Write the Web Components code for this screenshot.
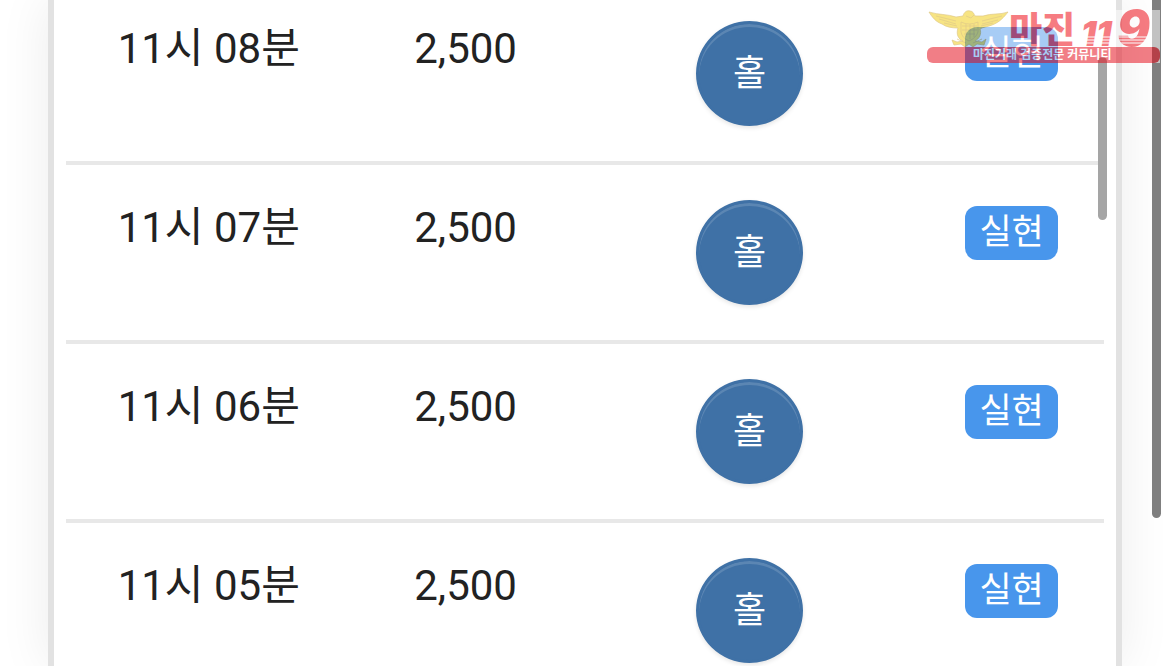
<!DOCTYPE html>
<html lang="ko">
<head>
<meta charset="utf-8">
<meta name="viewport" content="width=device-width, initial-scale=1">
<title>거래내역</title>
<style>
  body {
    margin: 0;
    background: #fff;
    color: #222;
    font-family: Roboto, "Noto Sans CJK KR", sans-serif;
    height: 100vh;
    overflow: hidden;
  }
</style>
</head>
<body>
<trade-page>
  <trade-panel><trade-list></trade-list></trade-panel>
  <brand-mark slot="mark"></brand-mark>
</trade-page>

<script>
class TradePage extends HTMLElement {
  constructor() {
    super();
    this.attachShadow({ mode: 'open' }).innerHTML = `
      <style>
        :host {
          display: block;
          position: relative;
          height: 100%;
          padding: 0 48px;
          box-sizing: border-box;
          overflow: hidden;
        }
        .thumb {
          position: absolute;
          top: -8px;
          right: 9px;
          width: 9px;
          height: 526px;
          border-radius: 5px;
          background: #7f7f7f;
        }
        ::slotted([slot="mark"]) {
          position: absolute;
          top: 10px;
          right: 10px;
        }
      </style>
      <slot></slot>
      <div class="thumb"></div>
      <slot name="mark"></slot>
    `;
  }
}

class TradePanel extends HTMLElement {
  constructor() {
    super();
    this.attachShadow({ mode: 'open' }).innerHTML = `
      <style>
        :host {
          display: block;
          position: relative;
          height: 100%;
          box-sizing: border-box;
          padding: 0 12px;
          border: solid #e2e2e2;
          border-width: 0 6px;
          background: #fff;
          box-shadow: 0 0 48px rgba(0, 0, 0, 0.08);
        }
        .view {
          height: 100%;
          overflow: hidden;
        }
        .thumb {
          position: absolute;
          top: 57px;
          right: 9px;
          width: 9px;
          height: 163px;
          border-radius: 5px;
          background: #a5a5a5;
        }
      </style>
      <div class="view"><slot></slot></div>
      <div class="thumb"></div>
    `;
  }
}

class PickButton extends HTMLElement {
  constructor() {
    super();
    this.attachShadow({ mode: 'open' }).innerHTML = `
      <style>
        :host { display: inline-block; vertical-align: top; }
        button {
          display: block;
          width: 107px;
          height: 105px;
          padding: 0;
          border: 3px solid #3f71a6;
          border-radius: 50%;
          background: #3f71a6;
          color: #fff;
          font: inherit;
          font-size: 36px;
          line-height: 101px;
          box-shadow: inset 0 3px 0 rgba(255, 255, 255, 0.15), 0 2px 4px rgba(0, 0, 0, 0.1);
        }
      </style>
      <button type="button"><slot></slot></button>
    `;
  }
}

class StatusTag extends HTMLElement {
  constructor() {
    super();
    this.attachShadow({ mode: 'open' }).innerHTML = `
      <style>
        :host {
          display: inline-block;
          vertical-align: top;
          margin-top: 6px;
          padding: 0 14px;
          border-radius: 12px;
          background: #4896ec;
          color: #fff;
          font-size: 35px;
          line-height: 54px;
        }
      </style>
      <slot></slot>
    `;
  }
}

class TradeList extends HTMLElement {
  constructor() {
    super();
    this.attachShadow({ mode: 'open' });
  }

  connectedCallback() {
    const rows = [
      ['11시 08분', '2,500', '홀', '실현'],
      ['11시 07분', '2,500', '홀', '실현'],
      ['11시 06분', '2,500', '홀', '실현'],
      ['11시 05분', '2,500', '홀', '실현']
    ];
    this.shadowRoot.innerHTML = `
      <style>
        /* the list is scrolled a little way into its first row */
        :host { display: block; margin-top: -14px; }
        table {
          width: 100%;
          table-layout: fixed;
          border-spacing: 0;
          font-size: 42px;
          line-height: 56px;
        }
        .time { width: 27.5%; }
        .amount { width: 22%; }
        .pick { width: 32.7%; }
        td {
          padding: 35px 0;
          border-bottom: 4px solid #e8e8e8;
          text-align: center;
          vertical-align: top;
          white-space: nowrap;
        }
      </style>
      <table>
        <colgroup><col class="time"><col class="amount"><col class="pick"><col></colgroup>
        <tbody>
          ${rows.map(([time, amount, pick, status]) => `
            <tr>
              <td>${time}</td>
              <td>${amount}</td>
              <td><pick-button>${pick}</pick-button></td>
              <td><status-tag>${status}</status-tag></td>
            </tr>`).join('')}
        </tbody>
      </table>
    `;
  }
}

class BrandMark extends HTMLElement {
  constructor() {
    super();
    this.attachShadow({ mode: 'open' }).innerHTML = `
      <style>
        :host { display: block; opacity: 0.52; pointer-events: none; }
        svg { display: block; overflow: visible; }
        text { font-family: Roboto, "Noto Sans CJK KR", sans-serif; }
        .name { font-size: 36px; font-weight: 900; fill: #ee0510; }
        .num { font-family: Inter, Roboto, sans-serif; font-weight: 900; font-style: italic; fill: #ee0510; }
        .small { font-size: 34px; }
        .big { font-size: 49px; }
        .line { font-size: 12px; font-weight: 700; fill: #fff; }
      </style>
      <svg width="233" height="53" viewBox="0 0 233 53">
        <rect x="2" width="231" height="53" fill="#fff"/>
        <!-- eagle -->
        <g fill="#f0cc14" stroke="#c49a1c" stroke-width="0.7" stroke-linejoin="round">
          <path d="M2 2 C12 5 20 4 29 7 L36 6 C37 2 40 0 43 1 C46 1 47 4 48 6 L56 6 C65 3 73 5 81 2 C77 7 73 12 65 15 C60 17 56 17 53 19 C55 24 52 29 48 31 L55 32 L59 29 L57 35 L50 34 L46 37 L42 34 L38 37 L34 34 L27 35 L25 30 L30 32 L36 31 C31 29 29 24 31 18 C25 18 19 17 15 14 C9 12 5 7 2 2Z"/>
          <path d="M34 12 Q42 16 51 12 L51 22 Q49 28 42 31 Q35 28 34 22Z"/>
          <path d="M9 6 L29 11 M12 9 L29 14 M17 13 L30 16 M75 6 L55 11 M71 10 L55 14 M66 13 L54 16 M35 16 L50 16 M35 20 L50 20 M37 24 L48 24 M39 14 V27 M43 14 V29 M47 14 V27 M39 6 L44 8 L47 5 M30 29 L39 33 M55 29 L46 33" fill="none"/>
        </g>
        <text class="name" x="82" y="33">마진</text>
        <text class="num small" x="154" y="36">11</text>
        <text class="num big" x="190" y="36">9</text>
        <path d="M150 27 H226 M150 30 H226 M150 33 H226" stroke="#fff" stroke-width="1"/>
        <rect y="37" width="233" height="16" rx="6" fill="#e60a18"/>
        <text class="line" x="46" y="49">마진거래 검증전문 커뮤니티</text>
      </svg>
    `;
  }
}

customElements.define('trade-page', TradePage);
customElements.define('trade-panel', TradePanel);
customElements.define('pick-button', PickButton);
customElements.define('status-tag', StatusTag);
customElements.define('trade-list', TradeList);
customElements.define('brand-mark', BrandMark);
</script>
</body>
</html>
